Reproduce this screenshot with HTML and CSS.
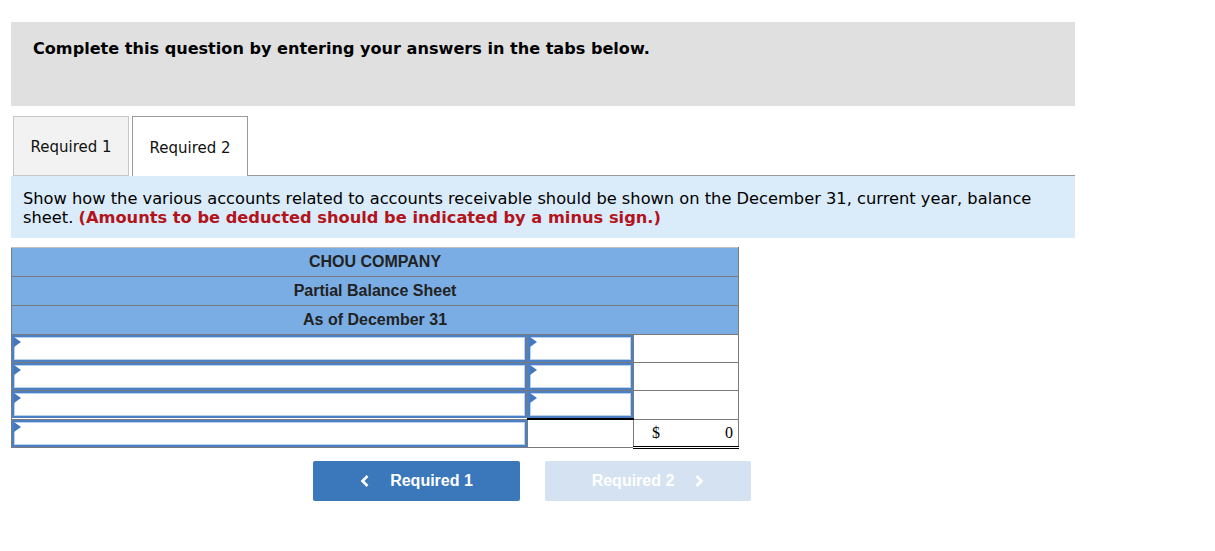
FILE: index.html
```html
<!DOCTYPE html>
<html>
<head>
<meta charset="utf-8">
<link rel="stylesheet" href="styles.css">
</head>
<body>
<div class="page">
  <div class="banner">Complete this question by entering your answers in the tabs below.</div>
  <div class="tabs">
    <div class="tab">Required 1</div>
    <div class="tab active">Required 2</div>
    <div class="tab-fill"></div>
  </div>
  <div class="info">Show how the various accounts related to accounts receivable should be shown on the December 31, current year, balance sheet. <span class="note">(Amounts to be deducted should be indicated by a minus sign.)</span></div>
  <table class="sheet">
    <colgroup>
      <col class="w1"><col class="w2"><col class="w3">
    </colgroup>
    <tr class="head"><td colspan="3">CHOU COMPANY</td></tr>
    <tr class="head"><td colspan="3">Partial Balance Sheet</td></tr>
    <tr class="head"><td colspan="3">As of December 31</td></tr>
    <tr class="row">
      <td><div class="inp flag"></div></td>
      <td><div class="inp flag"></div></td>
      <td></td>
    </tr>
    <tr class="row">
      <td><div class="inp flag"></div></td>
      <td><div class="inp flag"></div></td>
      <td></td>
    </tr>
    <tr class="row">
      <td><div class="inp flag"></div></td>
      <td class="under"><div class="inp flag"></div></td>
      <td></td>
    </tr>
    <tr class="row">
      <td><div class="inp flag"></div></td>
      <td></td>
      <td class="total"><span class="cur">$</span><span class="amt">0</span></td>
    </tr>
  </table>
  <div class="nav">
    <button class="btn prev"><svg class="chev" width="10" height="14" viewBox="0 0 10 14"><polyline points="7.5,2 2.5,7 7.5,12" fill="none" stroke="#fff" stroke-width="2.6"/></svg>Required 1</button>
    <button class="btn next">Required 2<svg class="chev" width="10" height="14" viewBox="0 0 10 14"><polyline points="2.5,2 7.5,7 2.5,12" fill="none" stroke="#fff" stroke-width="2.6"/></svg></button>
  </div>
</div>
</body>
</html>
```
FILE: styles.css
```css
html, body { margin: 0; padding: 0; background: #fff; }
.page {
  margin-left: 11px;
  padding-top: 22px;
  width: 1064px;
  font-family: "DejaVu Sans", Verdana, sans-serif;
  color: #000;
}
.banner {
  background: #e0e0e0;
  height: 84px;
  box-sizing: border-box;
  padding: 16px 0 0 22px;
  font-weight: bold;
  font-size: 16.1px;
  line-height: 21px;
}
.tabs {
  display: flex;
  margin-top: 10px;
  height: 60px;
}
.tab {
  box-sizing: border-box;
  width: 116px;
  height: 60px;
  margin-left: 2px;
  padding-top: 2px;
  border: 1px solid #c8c8c8;
  background: #f2f2f2;
  font-size: 15px;
  display: flex;
  align-items: center;
  justify-content: center;
  color: #111;
}
.tab.active {
  margin-left: 3px;
  background: #fff;
  border-color: #999;
  border-bottom: none;
}
.tab-fill {
  flex: 1;
  border-bottom: 1px solid #999;
  height: 59px;
}
.info {
  background: #daebf9;
  height: 62px;
  box-sizing: border-box;
  padding: 13px 12px 0 12px;
  font-size: 16.25px;
  line-height: 19px;
}
.note { color: #b3141c; font-weight: bold; }
.sheet {
  margin-top: 9px;
  width: 727px;
  border-collapse: collapse;
  font-family: "Liberation Sans", Arial, sans-serif;
  font-size: 16px;
  table-layout: fixed;
}
.w1 { width: 516px; }
.w2 { width: 106px; }
.w3 { width: 105px; }
.sheet td { padding: 0; border: 1px solid #7a7a7a; }
.head td {
  background: #7aade4;
  text-align: center;
  font-weight: bold;
  color: #222;
  height: 28px;
  line-height: 18px;
}
.sheet tr:first-child td { border-top-color: #c0c0c0; }
.row td { height: 27px; vertical-align: top; }
.inp {
  position: relative;
  height: 27px;
  box-sizing: border-box;
  border: 2px solid #4b80c4;
  box-shadow: inset 0 0 0 1px #b9d1ee;
  background: #fff;
}
.flag::before {
  content: "";
  position: absolute;
  left: 0;
  top: 0;
  border-top: 5px solid transparent;
  border-bottom: 5px solid transparent;
  border-left: 7px solid #4477bb;
}
.sheet td.under { border-bottom: 2px solid #000; }
.sheet td.total {
  font-family: "Liberation Serif", "Times New Roman", serif;
  font-size: 16px;
  line-height: 18px;
  border-bottom: 3px double #000;
  vertical-align: middle;
  height: 25px;
}
.cur { padding-left: 18px; }
.amt { float: right; padding-right: 5px; }
.nav {
  display: flex;
  gap: 25px;
  margin-top: 12px;
  margin-left: 302px;
}
.btn {
  width: 207px;
  height: 40px;
  border: none;
  border-radius: 2px;
  color: #fff;
  font-family: "Liberation Sans", Arial, sans-serif;
  font-weight: bold;
  font-size: 16px;
  display: flex;
  align-items: center;
  justify-content: center;
  padding: 0;
}
.prev { background: #3a77bb; }
.next { background: #d5e2f1; width: 206px; }
.prev .chev { margin-right: 20px; }
.next .chev { margin-left: 20px; }
```
